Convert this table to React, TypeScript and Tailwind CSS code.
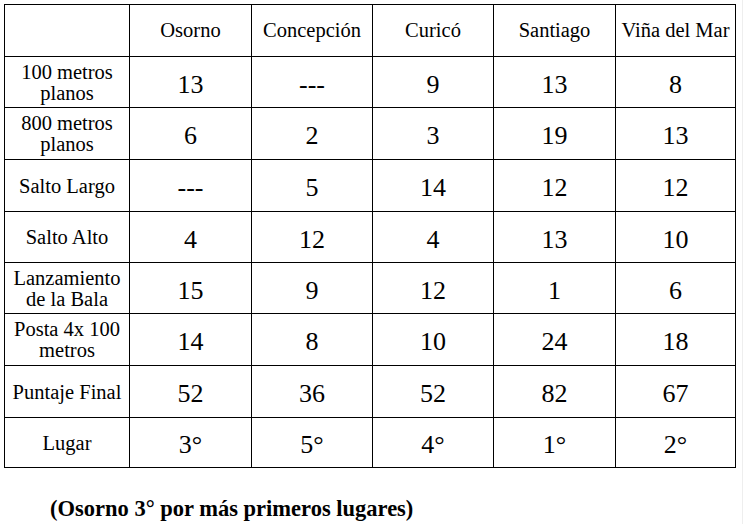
import React from "react";

const cities = ["Osorno", "Concepción", "Curicó", "Santiago", "Viña del Mar"];

const rows: { label: React.ReactNode; values: string[]; h: string }[] = [
  { label: <>100 metros<br />planos</>, values: ["13", "---", "9", "13", "8"], h: "h-[51px]" },
  { label: <>800 metros<br />planos</>, values: ["6", "2", "3", "19", "13"], h: "h-[52px]" },
  { label: "Salto Largo", values: ["---", "5", "14", "12", "12"], h: "h-[52px]" },
  { label: "Salto Alto", values: ["4", "12", "4", "13", "10"], h: "h-[51px]" },
  { label: <>Lanzamiento<br />de la Bala</>, values: ["15", "9", "12", "1", "6"], h: "h-[51px]" },
  { label: <>Posta 4x 100<br />metros</>, values: ["14", "8", "10", "24", "18"], h: "h-[52px]" },
  { label: "Puntaje Final", values: ["52", "36", "52", "82", "67"], h: "h-[52px]" },
  { label: "Lugar", values: ["3°", "5°", "4°", "1°", "2°"], h: "h-[50px]" },
];

const App = () => {
  return (
    <div className="w-[744px] h-[524px] bg-white text-black relative font-['Liberation_Serif',serif]">
      <div className="absolute right-[1px] top-0 bottom-0 w-px bg-[#eeeeee]" />
      <div className="pl-[4px] pt-[4px]">
        <table className="table-fixed border-collapse w-[731px] font-['Liberation_Serif',serif]">
          <colgroup>
            <col className="w-[125px]" />
            <col className="w-[122px]" />
            <col className="w-[121px]" />
            <col className="w-[121px]" />
            <col className="w-[122px]" />
            <col className="w-[120px]" />
          </colgroup>
          <tbody>
            <tr className="h-[52px]">
              <td className="border border-black" />
              {cities.map((c) => (
                <td key={c} className="border border-black text-center p-0 pt-[3px]">
                  <span className="text-[20.5px] leading-[21px] font-['Liberation_Serif',serif]">{c}</span>
                </td>
              ))}
            </tr>
            {rows.map((r, i) => (
              <tr key={i} className={r.h}>
                <td className="border border-black text-center p-0 pt-[1px]">
                  <div className="text-[20.5px] leading-[21px] font-['Liberation_Serif',serif]">{r.label}</div>
                </td>
                {r.values.map((v, j) => (
                  <td key={j} className="border border-black text-center p-0 pt-[6px]">
                    <span className="text-[26px] leading-[28px] font-['Liberation_Serif',serif]">{v}</span>
                  </td>
                ))}
              </tr>
            ))}
          </tbody>
        </table>
        <p className="mt-[28px] pl-[46px] text-[22.5px] leading-[26px] font-bold font-['Liberation_Serif',serif]">
          (Osorno 3° por más primeros lugares)
        </p>
      </div>
    </div>
  );
};

export default App;
